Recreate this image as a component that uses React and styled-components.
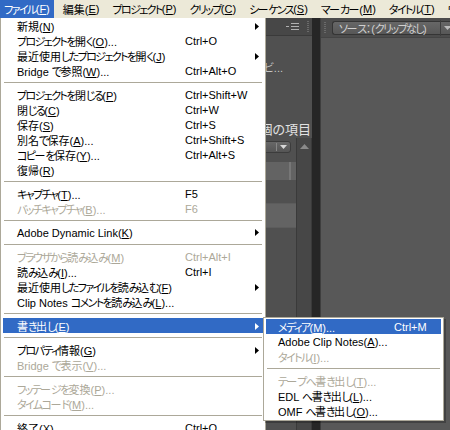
import React from "react";
import styled, { createGlobalStyle } from "styled-components";

const GlobalStyle = createGlobalStyle`
  html, body { margin: 0; padding: 0; background: #2b2b2b; }
  body { font-family: "Liberation Sans", "Noto Sans CJK JP", sans-serif; }
`;

const Root = styled.div`
  position: relative;
  width: 450px;
  height: 430px;
  overflow: hidden;
  display: flex;
  flex-direction: column;
  font-size: 11px;
  font-feature-settings: "palt";
`;

const Kana = styled.span`
  letter-spacing: -1.6px;
`;

/* hiragana + katakana, except the long vowel mark which stays full width */
const KANA_RE = /([\u3040-\u30fb\u30fd-\u30ff]+)/;

const JText = ({ children }) =>
  String(children)
    .split(KANA_RE)
    .map((part, i) =>
      i % 2 === 1 ? <Kana key={i}>{part}</Kana> : part
    );

const MenuBar = styled.div`
  flex: none;
  height: 18px;
  display: flex;
  background: #ece9d8;
  white-space: nowrap;
`;

const MenuTitle = styled.div`
  display: flex;
  align-items: center;
  padding: 0 4px;
  margin-right: 5px;
  color: ${(p) => (p.$active ? "#fff" : "#000")};
  background: ${(p) => (p.$active ? "#316ac5" : "transparent")};
`;

const Workspace = styled.div`
  flex: 1;
  min-height: 0;
  display: flex;
  background: #2b2b2b;
`;

const ProjectPanel = styled.div`
  flex: 0 0 312px;
  display: flex;
  flex-direction: column;
  background: #505050;
`;

const PanelHeader = styled.div`
  flex: none;
  height: 17px;
  display: flex;
  align-items: center;
  justify-content: flex-end;
  gap: 8px;
  padding-right: 3px;
  background: #474747;
  border-bottom: 1px solid #3a3a3a;
`;

const Grip = styled.div`
  width: 2px;
  height: 12px;
  background-image: linear-gradient(#6a6a6a 50%, transparent 50%);
  background-size: 2px 2px;
`;

const InfoLine = styled.div`
  margin-top: 23px;
  height: 14px;
  padding-right: 29px;
  text-align: right;
  color: #c8c8c8;
  font-size: 11px;
  white-space: nowrap;
`;

const CountLine = styled.div`
  margin-top: 49px;
  height: 16px;
  padding-right: 1px;
  text-align: right;
  color: #e2e2e2;
  font-size: 13px;
  line-height: 16px;
  white-space: nowrap;
`;

const ListArea = styled.div`
  flex: 1;
  display: flex;
  min-height: 0;
`;

const ListColumn = styled.div`
  flex: 1;
  display: flex;
  flex-direction: column;
`;

const DropRow = styled.div`
  height: 17px;
  display: flex;
  align-items: center;
  justify-content: flex-end;
  padding-right: 5px;
`;

const Dropdown = styled.div`
  width: 60px;
  height: 12px;
  display: flex;
  align-items: center;
  justify-content: flex-end;
  gap: 3px;
  padding-right: 3px;
  box-sizing: border-box;
  border: 1px solid #3c3c3c;
  border-radius: 3px;
  background: linear-gradient(#686868, #555555);
`;

const VBar = styled.div`
  width: 1px;
  height: 8px;
  background: #888;
`;

const ListRow = styled.div`
  height: ${(p) => p.$h}px;
  display: flex;
  justify-content: flex-end;
  padding-right: 5px;
  background: ${(p) => (p.$light ? "#636363" : "#505050")};
  border-top: ${(p) => (p.$line ? "1px solid #5c5c5c" : "none")};
`;

const ColDivider = styled.div`
  width: 2px;
  height: 100%;
  background: #777;
`;

const ScrollBar = styled.div`
  flex: 0 0 14px;
  display: flex;
  flex-direction: column;
  align-items: center;
  padding-top: 6px;
  background: #474747;
  border-left: 1px solid #3a3a3a;
  border-right: 1px solid #3a3a3a;
`;

const Gutter = styled.div`
  flex: 0 0 8px;
  background: #262626;
  border-right: 1px solid #3e3e3e;
`;

const SourcePanel = styled.div`
  flex: 1;
  display: flex;
  flex-direction: column;
  background: #585858;
`;

const SourceHeader = styled.div`
  flex: none;
  height: 19px;
  display: flex;
  align-items: center;
  gap: 6px;
  padding-left: 3px;
  background: #4c4c4c;
  border-bottom: 1px solid #444;
`;

const Tab = styled.div`
  height: 14px;
  display: flex;
  align-items: center;
  box-sizing: border-box;
  border: 1px solid #353535;
  border-right: none;
  border-radius: 3px 0 0 3px;
  background: linear-gradient(#676767, #575757);
  color: #d0d0d0;
  white-space: nowrap;
`;

const TabLabel = styled.div`
  flex: none;
  width: 108px;
  padding-left: 6px;
  box-sizing: border-box;
  border-right: 1px solid #3e3e3e;
`;

const TabCaret = styled.div`
  padding: 0 6px 0 3px;
  display: flex;
  align-items: center;
`;

/* ---------- Menus ---------- */

const Menu = styled.div`
  position: absolute;
  left: ${(p) => p.$left}px;
  top: ${(p) => p.$top}px;
  width: ${(p) => p.$width}px;
  box-sizing: border-box;
  background: #fff;
  border: 1px solid #aca899;
  border-top: ${(p) => (p.$flatTop ? "none" : "1px solid #aca899")};
  padding: ${(p) => (p.$flatTop ? "0 2px 2px" : "1px 2px 2px")};
  box-shadow: ${(p) => (p.$shadow ? "2px 2px 0 rgba(0,0,0,0.25)" : "none")};
  white-space: nowrap;
`;

const Item = styled.div`
  height: 15px;
  display: grid;
  grid-template-columns: ${(p) => p.$labelW}px 1fr 5px;
  align-items: center;
  padding-left: ${(p) => p.$padL}px;
  padding-right: 3px;
  color: ${(p) => (p.$active ? "#fff" : p.$disabled ? "#aca899" : "#000")};
  background: ${(p) => (p.$active ? "#316ac5" : "transparent")};
`;

const Shortcut = styled.span`
  font-size: 11px;
`;

const Separator = styled.div`
  height: 9px;
  display: flex;
  align-items: center;
  padding: 0 1px;
  &::after {
    content: "";
    flex: 1;
    height: 1px;
    background: #aca899;
  }
`;

const Arrow = ({ color }) => (
  <svg width="4" height="7" viewBox="0 0 4 7">
    <path d="M0 0 L4 3.5 L0 7 Z" fill={color} />
  </svg>
);

const PanelMenuIcon = () => (
  <svg width="13" height="7" viewBox="0 0 13 7">
    <rect x="0" y="3" width="3" height="1" fill="#b0b0b0" />
    <rect x="5" y="0" width="8" height="1" fill="#b0b0b0" />
    <rect x="5" y="3" width="8" height="1" fill="#b0b0b0" />
    <rect x="5" y="6" width="8" height="1" fill="#b0b0b0" />
  </svg>
);

const DownCaret = ({ color = "#d8d8d8" }) => (
  <svg width="7" height="4" viewBox="0 0 7 4">
    <path d="M0 0 L7 0 L3.5 4 Z" fill={color} />
  </svg>
);

const UpCaret = () => (
  <svg width="9" height="5" viewBox="0 0 9 5">
    <path d="M0 5 L9 5 L4.5 0 Z" fill="#8a8a8a" />
  </svg>
);

const mainItems = [
  { t: "新規", k: "N", sub: true },
  { t: "プロジェクトを開く", k: "O", dots: true, sc: "Ctrl+O" },
  { t: "最近使用したプロジェクトを開く", k: "J", sub: true },
  { t: "Bridge で参照", k: "W", dots: true, sc: "Ctrl+Alt+O" },
  "sep",
  { t: "プロジェクトを閉じる", k: "P", sc: "Ctrl+Shift+W" },
  { t: "閉じる", k: "C", sc: "Ctrl+W" },
  { t: "保存", k: "S", sc: "Ctrl+S" },
  { t: "別名で保存", k: "A", dots: true, sc: "Ctrl+Shift+S" },
  { t: "コピーを保存", k: "Y", dots: true, sc: "Ctrl+Alt+S" },
  { t: "復帰", k: "R" },
  "sep",
  { t: "キャプチャ", k: "T", dots: true, sc: "F5" },
  { t: "バッチキャプチャ", k: "B", dots: true, sc: "F6", dis: true },
  "sep",
  { t: "Adobe Dynamic Link", k: "K", sub: true },
  "sep",
  { t: "ブラウザから読み込み", k: "M", sc: "Ctrl+Alt+I", dis: true },
  { t: "読み込み", k: "I", dots: true, sc: "Ctrl+I" },
  { t: "最近使用したファイルを読み込む", k: "F", sub: true },
  { t: "Clip Notes コメントを読み込み", k: "L", dots: true },
  "sep",
  { t: "書き出し", k: "E", sub: true, active: true },
  "sep",
  { t: "プロパティ情報", k: "G", sub: true },
  { t: "Bridge で表示", k: "V", dots: true, dis: true },
  "sep",
  { t: "フッテージを変換", k: "P", dots: true, dis: true },
  { t: "タイムコード", k: "M", dots: true, dis: true },
  "sep",
  { t: "終了", k: "X", sc: "Ctrl+Q" },
];

const subItems = [
  { t: "メディア", k: "M", dots: true, sc: "Ctrl+M", active: true },
  { t: "Adobe Clip Notes", k: "A", dots: true },
  { t: "タイトル", k: "I", dots: true, dis: true },
  "sep",
  { t: "テープへ書き出し", k: "T", dots: true, dis: true },
  { t: "EDL へ書き出し", k: "L", dots: true },
  { t: "OMF へ書き出し", k: "O", dots: true },
];

const MenuList = ({ items, labelW, padL }) =>
  items.map((it, i) =>
    it === "sep" ? (
      <Separator key={i} />
    ) : (
      <Item
        key={i}
        $labelW={labelW}
        $padL={padL}
        $active={it.active}
        $disabled={it.dis}
      >
        <span>
          <JText>{it.t}</JText>(<u>{it.k}</u>){it.dots ? "..." : ""}
        </span>
        <Shortcut>{it.sc || ""}</Shortcut>
        {it.sub ? <Arrow color={it.active ? "#fff" : "#000"} /> : <span />}
      </Item>
    )
  );

const menuTitles = [
  ["ファイル", "F"],
  ["編集", "E"],
  ["プロジェクト", "P"],
  ["クリップ", "C"],
  ["シーケンス", "S"],
  ["マーカー", "M"],
  ["タイトル", "T"],
  ["ウィンドウ", "W"],
];

export default function App() {
  return (
    <Root>
      <GlobalStyle />
      <MenuBar>
        {menuTitles.map(([t, k], i) => (
          <MenuTitle key={t} $active={i === 0}>
            <JText>{t}</JText>(<u>{k}</u>)
          </MenuTitle>
        ))}
      </MenuBar>
      <Workspace>
        <ProjectPanel>
          <PanelHeader>
            <PanelMenuIcon />
            <Grip />
          </PanelHeader>
          <InfoLine>ムービ...</InfoLine>
          <CountLine>1 個の項目</CountLine>
          <ListArea>
            <ListColumn>
              <DropRow>
                <Dropdown>
                  <VBar />
                  <DownCaret />
                </Dropdown>
              </DropRow>
              <ListRow $h={7} />
              <ListRow $h={18} $light>
                <ColDivider />
              </ListRow>
              <ListRow $h={23} />
              <ListRow $h={23} $light $line />
              <ListRow $h={180} $line />
            </ListColumn>
            <ScrollBar>
              <UpCaret />
            </ScrollBar>
          </ListArea>
        </ProjectPanel>
        <Gutter />
        <SourcePanel>
          <SourceHeader>
            <Grip />
            <Tab>
              <TabLabel>
                <JText>ソース</JText>：(<JText>クリップなし</JText>)
              </TabLabel>
              <TabCaret>
                <DownCaret color="#bbb" />
              </TabCaret>
            </Tab>
          </SourceHeader>
        </SourcePanel>
      </Workspace>

      <Menu $left={0} $top={18} $width={266} $flatTop>
        <MenuList items={mainItems} labelW={168} padL={14} />
      </Menu>
      <Menu $left={263} $top={317} $width={181} $shadow>
        <MenuList items={subItems} labelW={116} padL={12} />
      </Menu>
    </Root>
  );
}
